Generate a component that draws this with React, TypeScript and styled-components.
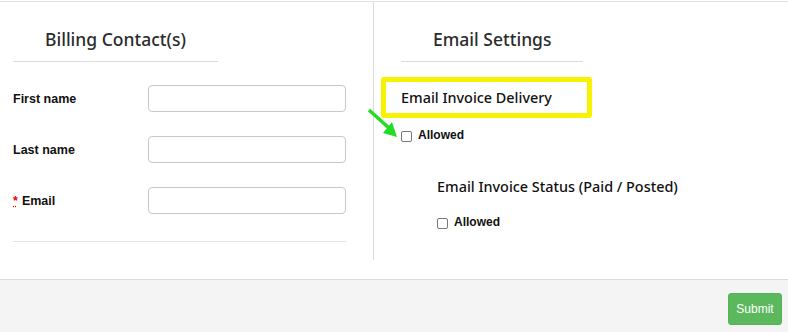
import React from "react";
import styled, { createGlobalStyle } from "styled-components";

const GlobalStyle = createGlobalStyle`
  html, body { margin: 0; padding: 0; background: #fff; }
  body { font-family: "Liberation Sans", Arial, sans-serif; color: #111; }
  * { box-sizing: border-box; }
`;

const Page = styled.div`
  margin-top: 1px;
  border-top: 1px solid #e2e2e2;
  width: 788px;
`;

const Main = styled.div`
  position: relative;
  display: flex;
  height: 277px;
  padding-bottom: 19px;
`;

const Panel = styled.section<{ $divider?: boolean; $padLeft: number; $padRight: number }>`
  width: ${(p) => (p.$divider ? "374px" : "auto")};
  flex: ${(p) => (p.$divider ? "0 0 374px" : "1 1 auto")};
  border-right: ${(p) => (p.$divider ? "1px solid #dcdcdc" : "none")};
  padding: 0 ${(p) => p.$padRight}px 0 ${(p) => p.$padLeft}px;
  display: flex;
  flex-direction: column;
  align-items: flex-start;
`;

const SectionTitle = styled.h2`
  display: inline-block;
  margin: 25px 0 0;
  padding: 0 32px 10px;
  font-family: "Noto Sans", "Open Sans", sans-serif;
  font-weight: 500;
  font-size: 17.5px;
  line-height: 24px;
  color: #2b2b2b;
  border-bottom: 1px solid #dcdcdc;
`;

const Fields = styled.div`
  display: flex;
  flex-direction: column;
  gap: 24px;
  margin-top: 23px;
  width: 100%;
`;

const FieldRow = styled.div`
  display: flex;
  align-items: center;
  height: 27px;
`;

const Label = styled.label`
  flex: 0 0 135px;
  font-size: 12.5px;
  font-weight: bold;
  color: #111;
`;

const Required = styled.abbr`
  color: #e00;
  text-decoration: underline dotted #e00;
  margin-right: 4px;
  cursor: help;
`;

const TextInput = styled.input`
  width: 198px;
  height: 27px;
  border: 1px solid #c8c8c8;
  border-radius: 4px;
  background: #fff;
  padding: 0 6px;
  font-size: 12px;
  outline: none;
`;

const Separator = styled.hr`
  width: 100%;
  margin: 27px 0 0;
  border: 0;
  border-top: 1px solid #e4e4e4;
`;

const Highlight = styled.div`
  margin: 15px 0 0 -20px;
  width: 211px;
  height: 41px;
  border: 5px solid #f7f200;
  border-radius: 3px;
  padding: 2px 0 0 15px;
`;

const SubTitle = styled.h3<{ $indent?: number; $top?: number }>`
  margin: ${(p) => p.$top ?? 0}px 0 0 ${(p) => p.$indent ?? 0}px;
  font-family: "Noto Sans", "Open Sans", sans-serif;
  font-weight: 500;
  font-size: 14.4px;
  line-height: 27px;
  color: #111;
  white-space: nowrap;
`;

const CheckRow = styled.label<{ $indent?: number; $top: number }>`
  display: flex;
  align-items: center;
  gap: 6px;
  margin-top: ${(p) => p.$top}px;
  margin-left: ${(p) => p.$indent ?? 0}px;
  font-size: 12px;
  font-weight: bold;
  color: #111;
  line-height: 14px;
`;

const Checkbox = styled.input`
  appearance: none;
  width: 11px;
  height: 11px;
  margin: 2px 0 0;
  border: 1px solid #777;
  border-radius: 2px;
  background: #fff;
`;

const Arrow = styled.svg`
  position: absolute;
  left: 364px;
  top: 102px;
  overflow: visible;
  pointer-events: none;
`;

const Footer = styled.footer`
  border-top: 1px solid #dcdcdc;
  background: #f4f4f4;
  height: 53px;
  display: flex;
  justify-content: flex-end;
  align-items: flex-start;
  padding: 13px 6px 0 0;
`;

const SubmitButton = styled.button`
  width: 54px;
  height: 32px;
  border: 1px solid #55b455;
  border-radius: 3px;
  background: #5cb85c;
  color: #fff;
  font-family: "Liberation Sans", Arial, sans-serif;
  font-size: 12px;
  padding: 0;
  cursor: pointer;
`;

export default function App() {
  return (
    <>
      <GlobalStyle />
      <Page>
        <Main>
          <Panel $divider $padLeft={13} $padRight={27}>
            <SectionTitle>Billing Contact(s)</SectionTitle>
            <Fields>
              <FieldRow>
                <Label htmlFor="fn">First name</Label>
                <TextInput id="fn" type="text" />
              </FieldRow>
              <FieldRow>
                <Label htmlFor="ln">Last name</Label>
                <TextInput id="ln" type="text" />
              </FieldRow>
              <FieldRow>
                <Label htmlFor="em">
                  <Required title="required">*</Required>Email
                </Label>
                <TextInput id="em" type="email" />
              </FieldRow>
            </Fields>
            <Separator />
          </Panel>
          <Panel $padLeft={27} $padRight={20}>
            <SectionTitle>Email Settings</SectionTitle>
            <Highlight>
              <SubTitle>Email Invoice Delivery</SubTitle>
            </Highlight>
            <CheckRow $top={10}>
              <Checkbox type="checkbox" />
              Allowed
            </CheckRow>
            <SubTitle $indent={36} $top={31}>
              Email Invoice Status (Paid / Posted)
            </SubTitle>
            <CheckRow $indent={36} $top={15}>
              <Checkbox type="checkbox" />
              Allowed
            </CheckRow>
          </Panel>
          <Arrow width="40" height="36" viewBox="0 0 40 36">
            <line x1="5" y1="6" x2="25" y2="24" stroke="#22dd22" strokeWidth="3.5" />
            <polygon points="33,33 19,29 28,18" fill="#22dd22" />
          </Arrow>
        </Main>
        <Footer>
          <SubmitButton type="button">Submit</SubmitButton>
        </Footer>
      </Page>
    </>
  );
}
